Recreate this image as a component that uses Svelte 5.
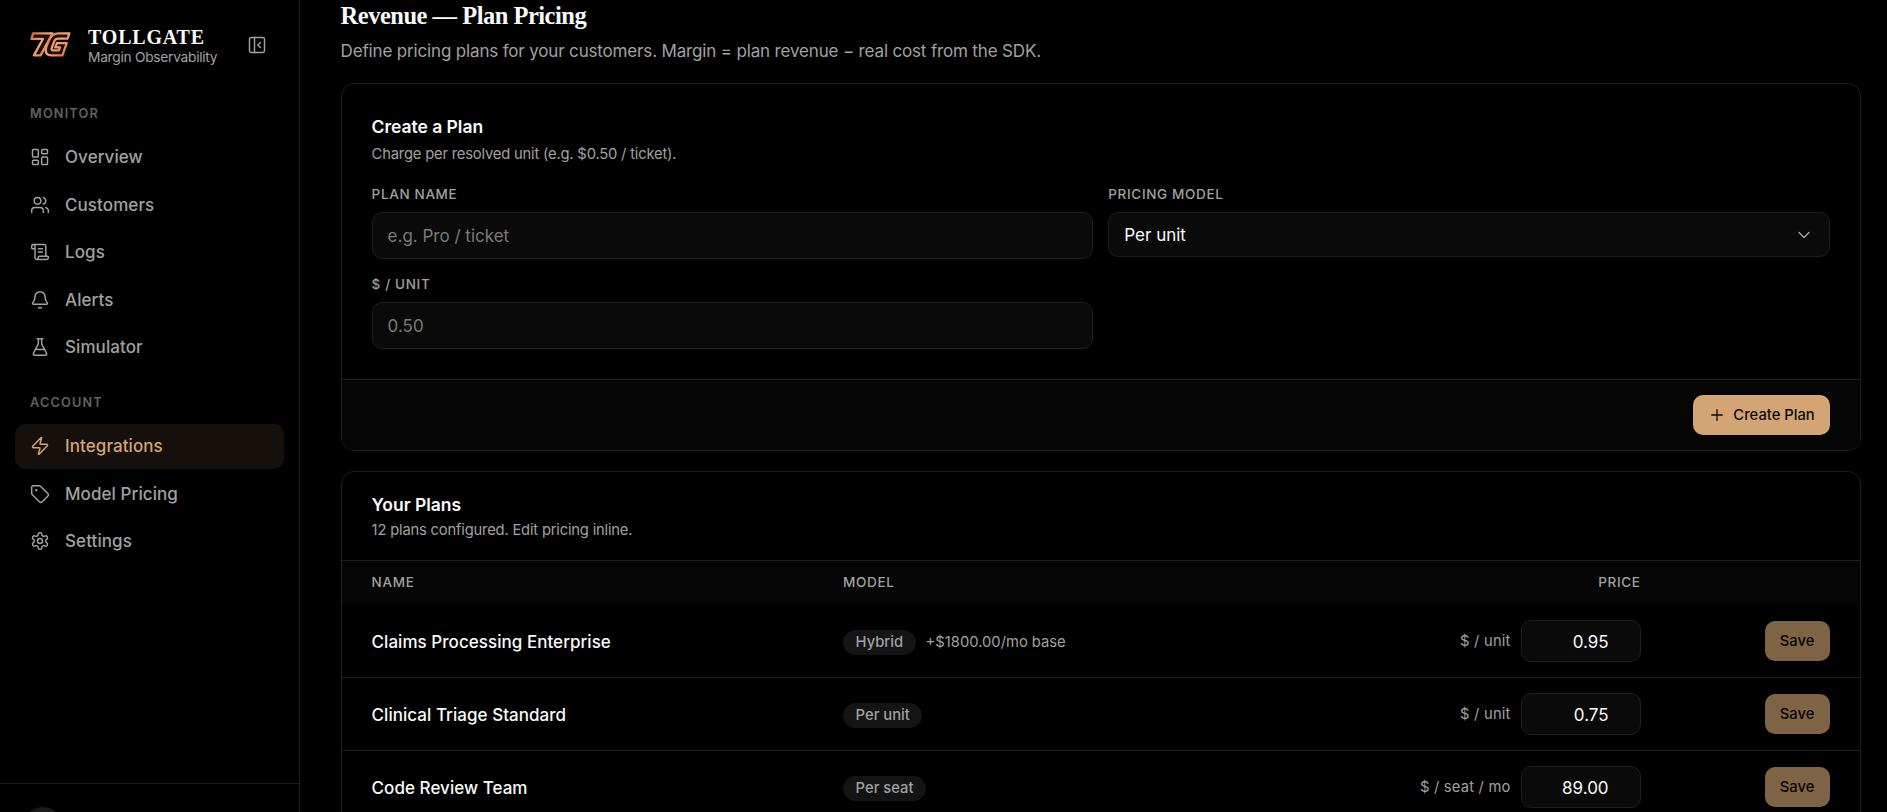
<script lang="ts">
  type Item = { label: string; icon: string; active?: boolean };

  const sections: Array<{ title: string; items: Item[] }> = [
    {
      title: 'Monitor',
      items: [
        { label: 'Overview', icon: 'grid' },
        { label: 'Customers', icon: 'users' },
        { label: 'Logs', icon: 'scroll' },
        { label: 'Alerts', icon: 'bell' },
        { label: 'Simulator', icon: 'flask' },
      ],
    },
    {
      title: 'Account',
      items: [
        { label: 'Integrations', icon: 'zap', active: true },
        { label: 'Model Pricing', icon: 'tag' },
        { label: 'Settings', icon: 'gear' },
      ],
    },
  ];

  let plans = $state([
    { name: 'Claims Processing Enterprise', model: 'Hybrid', base: '+$1800.00/mo base', unit: '$ / unit', price: '0.95' },
    { name: 'Clinical Triage Standard', model: 'Per unit', base: '', unit: '$ / unit', price: '0.75' },
    { name: 'Code Review Team', model: 'Per seat', base: '', unit: '$ / seat / mo', price: '89.00' },
  ]);

  let planName = $state('');
  let unitPrice = $state('');
</script>

{#snippet icon(name: string)}
  <svg class="icon" viewBox="0 0 24 24">
    {#if name === 'grid'}
      <rect width="7" height="9" x="3" y="3" rx="1" />
      <rect width="7" height="5" x="14" y="3" rx="1" />
      <rect width="7" height="9" x="14" y="12" rx="1" />
      <rect width="7" height="5" x="3" y="16" rx="1" />
    {:else if name === 'users'}
      <path d="M16 21v-2a4 4 0 0 0-4-4H6a4 4 0 0 0-4 4v2" />
      <circle cx="9" cy="7" r="4" />
      <path d="M22 21v-2a4 4 0 0 0-3-3.87M16 3.13a4 4 0 0 1 0 7.75" />
    {:else if name === 'scroll'}
      <path d="M15 12h-5M15 8h-5M19 17V5a2 2 0 0 0-2-2H4" />
      <path d="M8 21h12a2 2 0 0 0 2-2v-1a1 1 0 0 0-1-1H11a1 1 0 0 0-1 1v1a2 2 0 1 1-4 0V5a2 2 0 1 0-4 0v2a1 1 0 0 0 1 1h3" />
    {:else if name === 'bell'}
      <path d="M10.268 21a2 2 0 0 0 3.464 0" />
      <path d="M3.262 15.326A1 1 0 0 0 4 17h16a1 1 0 0 0 .74-1.673C19.41 13.956 18 12.499 18 8A6 6 0 0 0 6 8c0 4.499-1.411 5.956-2.738 7.326" />
    {:else if name === 'flask'}
      <path d="M14 2v6a2 2 0 0 0 .245.96l5.51 10.08A2 2 0 0 1 18 22H6a2 2 0 0 1-1.755-2.96l5.51-10.08A2 2 0 0 0 10 8V2M6.453 15h11.094M8.5 2h7" />
    {:else if name === 'zap'}
      <path d="M4 14a1 1 0 0 1-.78-1.63l9.9-10.2a.5.5 0 0 1 .86.46l-1.92 6.02A1 1 0 0 0 13 10h7a1 1 0 0 1 .78 1.63l-9.9 10.2a.5.5 0 0 1-.86-.46l1.92-6.02A1 1 0 0 0 11 14z" />
    {:else if name === 'tag'}
      <path d="M12.586 2.586A2 2 0 0 0 11.172 2H4a2 2 0 0 0-2 2v7.172a2 2 0 0 0 .586 1.414l8.704 8.704a2.426 2.426 0 0 0 3.42 0l6.58-6.58a2.426 2.426 0 0 0 0-3.42z" />
      <circle cx="7.5" cy="7.5" r=".5" fill="currentColor" />
    {:else if name === 'gear'}
      <path d="M12.22 2h-.44a2 2 0 0 0-2 2v.18a2 2 0 0 1-1 1.73l-.43.25a2 2 0 0 1-2 0l-.15-.08a2 2 0 0 0-2.73.73l-.22.38a2 2 0 0 0 .73 2.73l.15.1a2 2 0 0 1 1 1.72v.51a2 2 0 0 1-1 1.74l-.15.09a2 2 0 0 0-.73 2.73l.22.38a2 2 0 0 0 2.73.73l.15-.08a2 2 0 0 1 2 0l.43.25a2 2 0 0 1 1 1.73V20a2 2 0 0 0 2 2h.44a2 2 0 0 0 2-2v-.18a2 2 0 0 1 1-1.73l.43-.25a2 2 0 0 1 2 0l.15.08a2 2 0 0 0 2.73-.73l.22-.39a2 2 0 0 0-.73-2.73l-.15-.08a2 2 0 0 1-1-1.74v-.5a2 2 0 0 1 1-1.74l.15-.09a2 2 0 0 0 .73-2.73l-.22-.38a2 2 0 0 0-2.73-.73l-.15.08a2 2 0 0 1-2 0l-.43-.25a2 2 0 0 1-1-1.73V4a2 2 0 0 0-2-2z" />
      <circle cx="12" cy="12" r="3" />
    {:else if name === 'panel'}
      <rect width="18" height="18" x="3" y="3" rx="2" />
      <path d="M9 3v18M16 15l-3-3 3-3" />
    {:else if name === 'chevron'}
      <path d="m6 9 6 6 6-6" />
    {:else if name === 'plus'}
      <path d="M5 12h14M12 5v14" />
    {/if}
  </svg>
{/snippet}

<div class="app">
  <aside class="sidebar">
    <div class="brand">
      <svg class="logo" viewBox="0 0 40 24">
        <defs>
          <linearGradient id="copper" x1="0" y1="0" x2="1" y2="1">
            <stop offset="0" stop-color="#d9683f" />
            <stop offset="0.45" stop-color="#f2a67c" />
            <stop offset="1" stop-color="#dd6d45" />
          </linearGradient>
        </defs>
        <g fill="#1c0d07" stroke="url(#copper)" stroke-width="2.2" stroke-linejoin="round">
          <path d="M3 1.2H22L10.3 22.6H3.8L12.6 6.6H1.4L3 1.2Z" />
          <path d="M38.4 1.2H27.8C23 1.2 20 4 18.3 8.5L16 14C14.2 19.5 16.2 22.6 20.5 22.6H31.6L35.9 10.6H26.2L24.6 14.8H29.3L28.2 17.8H22.7C21 17.8 20.7 16.6 21.3 15L23.6 9C24.4 7.1 25.5 6.3 27.5 6.3H36.7L38.4 1.2Z" />
        </g>
      </svg>
      <div class="brand-text">
        <span class="brand-name">TOLLGATE</span>
        <span class="brand-tag">Margin Observability</span>
      </div>
      <button class="collapse" aria-label="Collapse sidebar">{@render icon('panel')}</button>
    </div>

    <nav>
      {#each sections as section}
        <div class="section">
          <div class="section-title">{section.title}</div>
          {#each section.items as item}
            <a class="nav-item" class:active={item.active} href="#top">
              {@render icon(item.icon)}
              <span>{item.label}</span>
            </a>
          {/each}
        </div>
      {/each}
    </nav>

    <div class="user">
      <div class="avatar"></div>
    </div>
  </aside>

  <main>
    <h1>Revenue — Plan Pricing</h1>
    <p class="lead">Define pricing plans for your customers. Margin = plan revenue − real cost from the SDK.</p>

    <section class="card">
      <div class="card-body">
        <h2>Create a Plan</h2>
        <p class="hint">Charge per resolved unit (e.g. $0.50 / ticket).</p>
        <div class="form">
          <label>
            <span class="label">Plan name</span>
            <input class="field" placeholder="e.g. Pro / ticket" bind:value={planName} />
          </label>
          <div>
            <span class="label">Pricing model</span>
            <button class="field select">
              <span>Per unit</span>
              {@render icon('chevron')}
            </button>
          </div>
          <label>
            <span class="label">$ / unit</span>
            <input class="field" placeholder="0.50" bind:value={unitPrice} />
          </label>
        </div>
      </div>
      <div class="card-footer">
        <button class="btn">{@render icon('plus')}<span>Create Plan</span></button>
      </div>
    </section>

    <section class="card">
      <div class="card-head">
        <h2>Your Plans</h2>
        <p class="hint">12 plans configured. Edit pricing inline.</p>
      </div>
      <div class="row thead">
        <span>Name</span>
        <span>Model</span>
        <span class="right">Price</span>
      </div>
      {#each plans as plan}
        <div class="row">
          <span class="plan-name">{plan.name}</span>
          <div class="model">
            <span class="pill">{plan.model}</span>
            {#if plan.base}<span class="base">{plan.base}</span>{/if}
          </div>
          <div class="price">
            <span>{plan.unit}</span>
            <input class="field" aria-label="Price" bind:value={plan.price} />
          </div>
          <button class="btn save" disabled>Save</button>
        </div>
      {/each}
    </section>
  </main>
</div>

<style>
  :global(body) {
    background: #000;
    overflow: hidden;
  }

  .app {
    --line: #1f1f1f;
    --muted: #a1a1a1;
    --accent: #d4a574;
    display: flex;
    height: 100vh;
    overflow: hidden;
    background: #000;
    color: #fafafa;
    font-family: Inter, 'Liberation Sans', sans-serif;
    font-size: 17px;
  }

  .app :global(*) {
    box-sizing: border-box;
  }

  h1, h2, p {
    margin: 0;
  }

  button, input {
    font: inherit;
    color: inherit;
    margin: 0;
  }

  .icon {
    width: 20px;
    height: 20px;
    flex-shrink: 0;
    fill: none;
    stroke: currentColor;
    stroke-width: 1.75;
    stroke-linecap: round;
    stroke-linejoin: round;
  }

  .sidebar {
    width: 300px;
    height: 848px;
    flex-shrink: 0;
    display: flex;
    flex-direction: column;
    border-right: 1px solid var(--line);
  }

  .brand {
    display: flex;
    align-items: center;
    height: 42px;
    margin: 24px 30px 38px;
  }

  .logo {
    width: 41px;
    height: 25px;
    margin: -1px 17px 0 0;
  }

  .brand-text {
    display: flex;
    flex-direction: column;
    white-space: nowrap;
  }

  .brand-name {
    font-family: 'Liberation Serif', serif;
    font-weight: 700;
    font-size: 20px;
    line-height: 22px;
    letter-spacing: 0.8px;
    padding-bottom: 1px;
  }

  .brand-tag {
    font-size: 13.75px;
    line-height: 16px;
    letter-spacing: -0.27px;
    color: var(--muted);
  }

  .collapse {
    display: flex;
    margin: 0 2px 0 auto;
    padding: 0;
    border: 0;
    background: none;
    color: var(--muted);
  }

  nav {
    padding: 0 15px;
  }

  .section {
    display: flex;
    flex-direction: column;
    gap: 2.5px;
    margin-bottom: 23.5px;
  }

  .section-title {
    margin: 0 15px 8px;
    font-size: 12.75px;
    font-weight: 600;
    line-height: 20px;
    letter-spacing: 1.15px;
    text-transform: uppercase;
    color: #606060;
  }

  .nav-item {
    display: flex;
    align-items: center;
    gap: 15px;
    height: 45px;
    padding: 0 15px;
    border-radius: 10px;
    font-weight: 500;
    letter-spacing: 0.08px;
    color: var(--muted);
    text-decoration: none;
  }

  .nav-item.active {
    background: #15100c;
    color: var(--accent);
  }

  .user {
    margin-top: auto;
    padding: 22.5px;
    border-top: 1px solid var(--line);
    height: 65px;
  }

  .avatar {
    width: 40px;
    height: 40px;
    border-radius: 50%;
    background: #1a1a1a;
  }

  main {
    flex: 1;
    height: 900px;
    padding: 0 26px 0 40.6px;
  }

  h1 {
    font-family: 'Liberation Serif', serif;
    font-weight: 700;
    font-size: 24.5px;
    line-height: 30px;
    letter-spacing: -0.5px;
    padding-top: 1px;
    margin-bottom: 8px;
  }

  .lead {
    line-height: 25px;
    letter-spacing: -0.16px;
    margin-bottom: 19px;
    color: var(--muted);
  }

  .card {
    border: 1px solid var(--line);
    border-radius: 13px;
    margin-bottom: 20px;
    overflow: hidden;
  }

  .card-body {
    padding: 30px;
  }

  h2 {
    font-size: 17.5px;
    font-weight: 600;
    line-height: 25px;
    letter-spacing: -0.03px;
  }

  .hint {
    font-size: 14.75px;
    line-height: 22px;
    letter-spacing: -0.19px;
    color: var(--muted);
  }

  .card-body .hint {
    margin: 4px 0 19px;
  }

  .form {
    display: grid;
    grid-template-columns: 1fr 1fr;
    align-items: start;
    gap: 15px;
  }

  .label {
    display: block;
    margin-bottom: 8px;
    font-size: 13.5px;
    font-weight: 500;
    line-height: 20px;
    letter-spacing: 0.65px;
    text-transform: uppercase;
    color: var(--muted);
  }

  .field {
    display: block;
    width: 100%;
    height: 47px;
    padding: 0 15px;
    border: 1px solid var(--line);
    border-radius: 10px;
    background: #0a0a0a;
    outline: none;
  }

  .field::placeholder {
    color: #7a7a7a;
  }

  .select {
    display: flex;
    align-items: center;
    justify-content: space-between;
    height: 45px;
  }

  .select .icon {
    color: var(--muted);
  }

  .card-footer {
    display: flex;
    justify-content: flex-end;
    padding: 15px 30px;
    border-top: 1px solid var(--line);
    background: #050505;
  }

  .btn {
    display: flex;
    align-items: center;
    justify-content: center;
    gap: 7px;
    width: 137px;
    height: 40px;
    padding: 0 0 1px;
    border: 0;
    border-radius: 10px;
    background: var(--accent);
    color: #0a0a0a;
    font-size: 14.75px;
    font-weight: 500;
    white-space: nowrap;
  }

  .btn .icon {
    width: 18px;
    height: 18px;
  }

  .card-head {
    padding: 20px 30px 19px;
    border-bottom: 1px solid var(--line);
  }

  .card-head .hint {
    margin-top: 2px;
  }

  .row {
    display: grid;
    grid-template-columns: 471.5px 398.5px 399px 189px;
    align-items: center;
    height: 73px;
    padding: 0 30px;
    border-bottom: 1px solid var(--line);
  }

  .thead {
    height: 44px;
    padding-bottom: 2px;
    border: 0;
    background: #050505;
    font-size: 13.5px;
    font-weight: 500;
    letter-spacing: 0.65px;
    text-transform: uppercase;
    color: var(--muted);
  }

  .right {
    text-align: right;
  }

  .plan-name {
    padding-top: 2px;
    font-weight: 500;
    letter-spacing: 0.04px;
  }

  .model {
    display: flex;
    align-items: center;
    gap: 10px;
    padding-top: 3px;
    font-size: 14.75px;
    color: var(--muted);
  }

  .base {
    padding-bottom: 1px;
  }

  .pill {
    padding: 0 12.5px;
    border-radius: 13px;
    background: #141414;
    font-weight: 500;
    line-height: 25px;
  }

  .price {
    display: flex;
    align-items: center;
    justify-content: flex-end;
    gap: 10px;
    font-size: 14.75px;
    letter-spacing: 0.2px;
    color: var(--muted);
  }

  .price .field {
    width: 120px;
    height: 42px;
    padding: 1px 31px 0 15px;
    font-size: 17px;
    letter-spacing: 0;
    color: #fafafa;
    text-align: right;
  }

  .save {
    width: 65px;
    justify-self: end;
    opacity: 0.6;
  }
</style>
